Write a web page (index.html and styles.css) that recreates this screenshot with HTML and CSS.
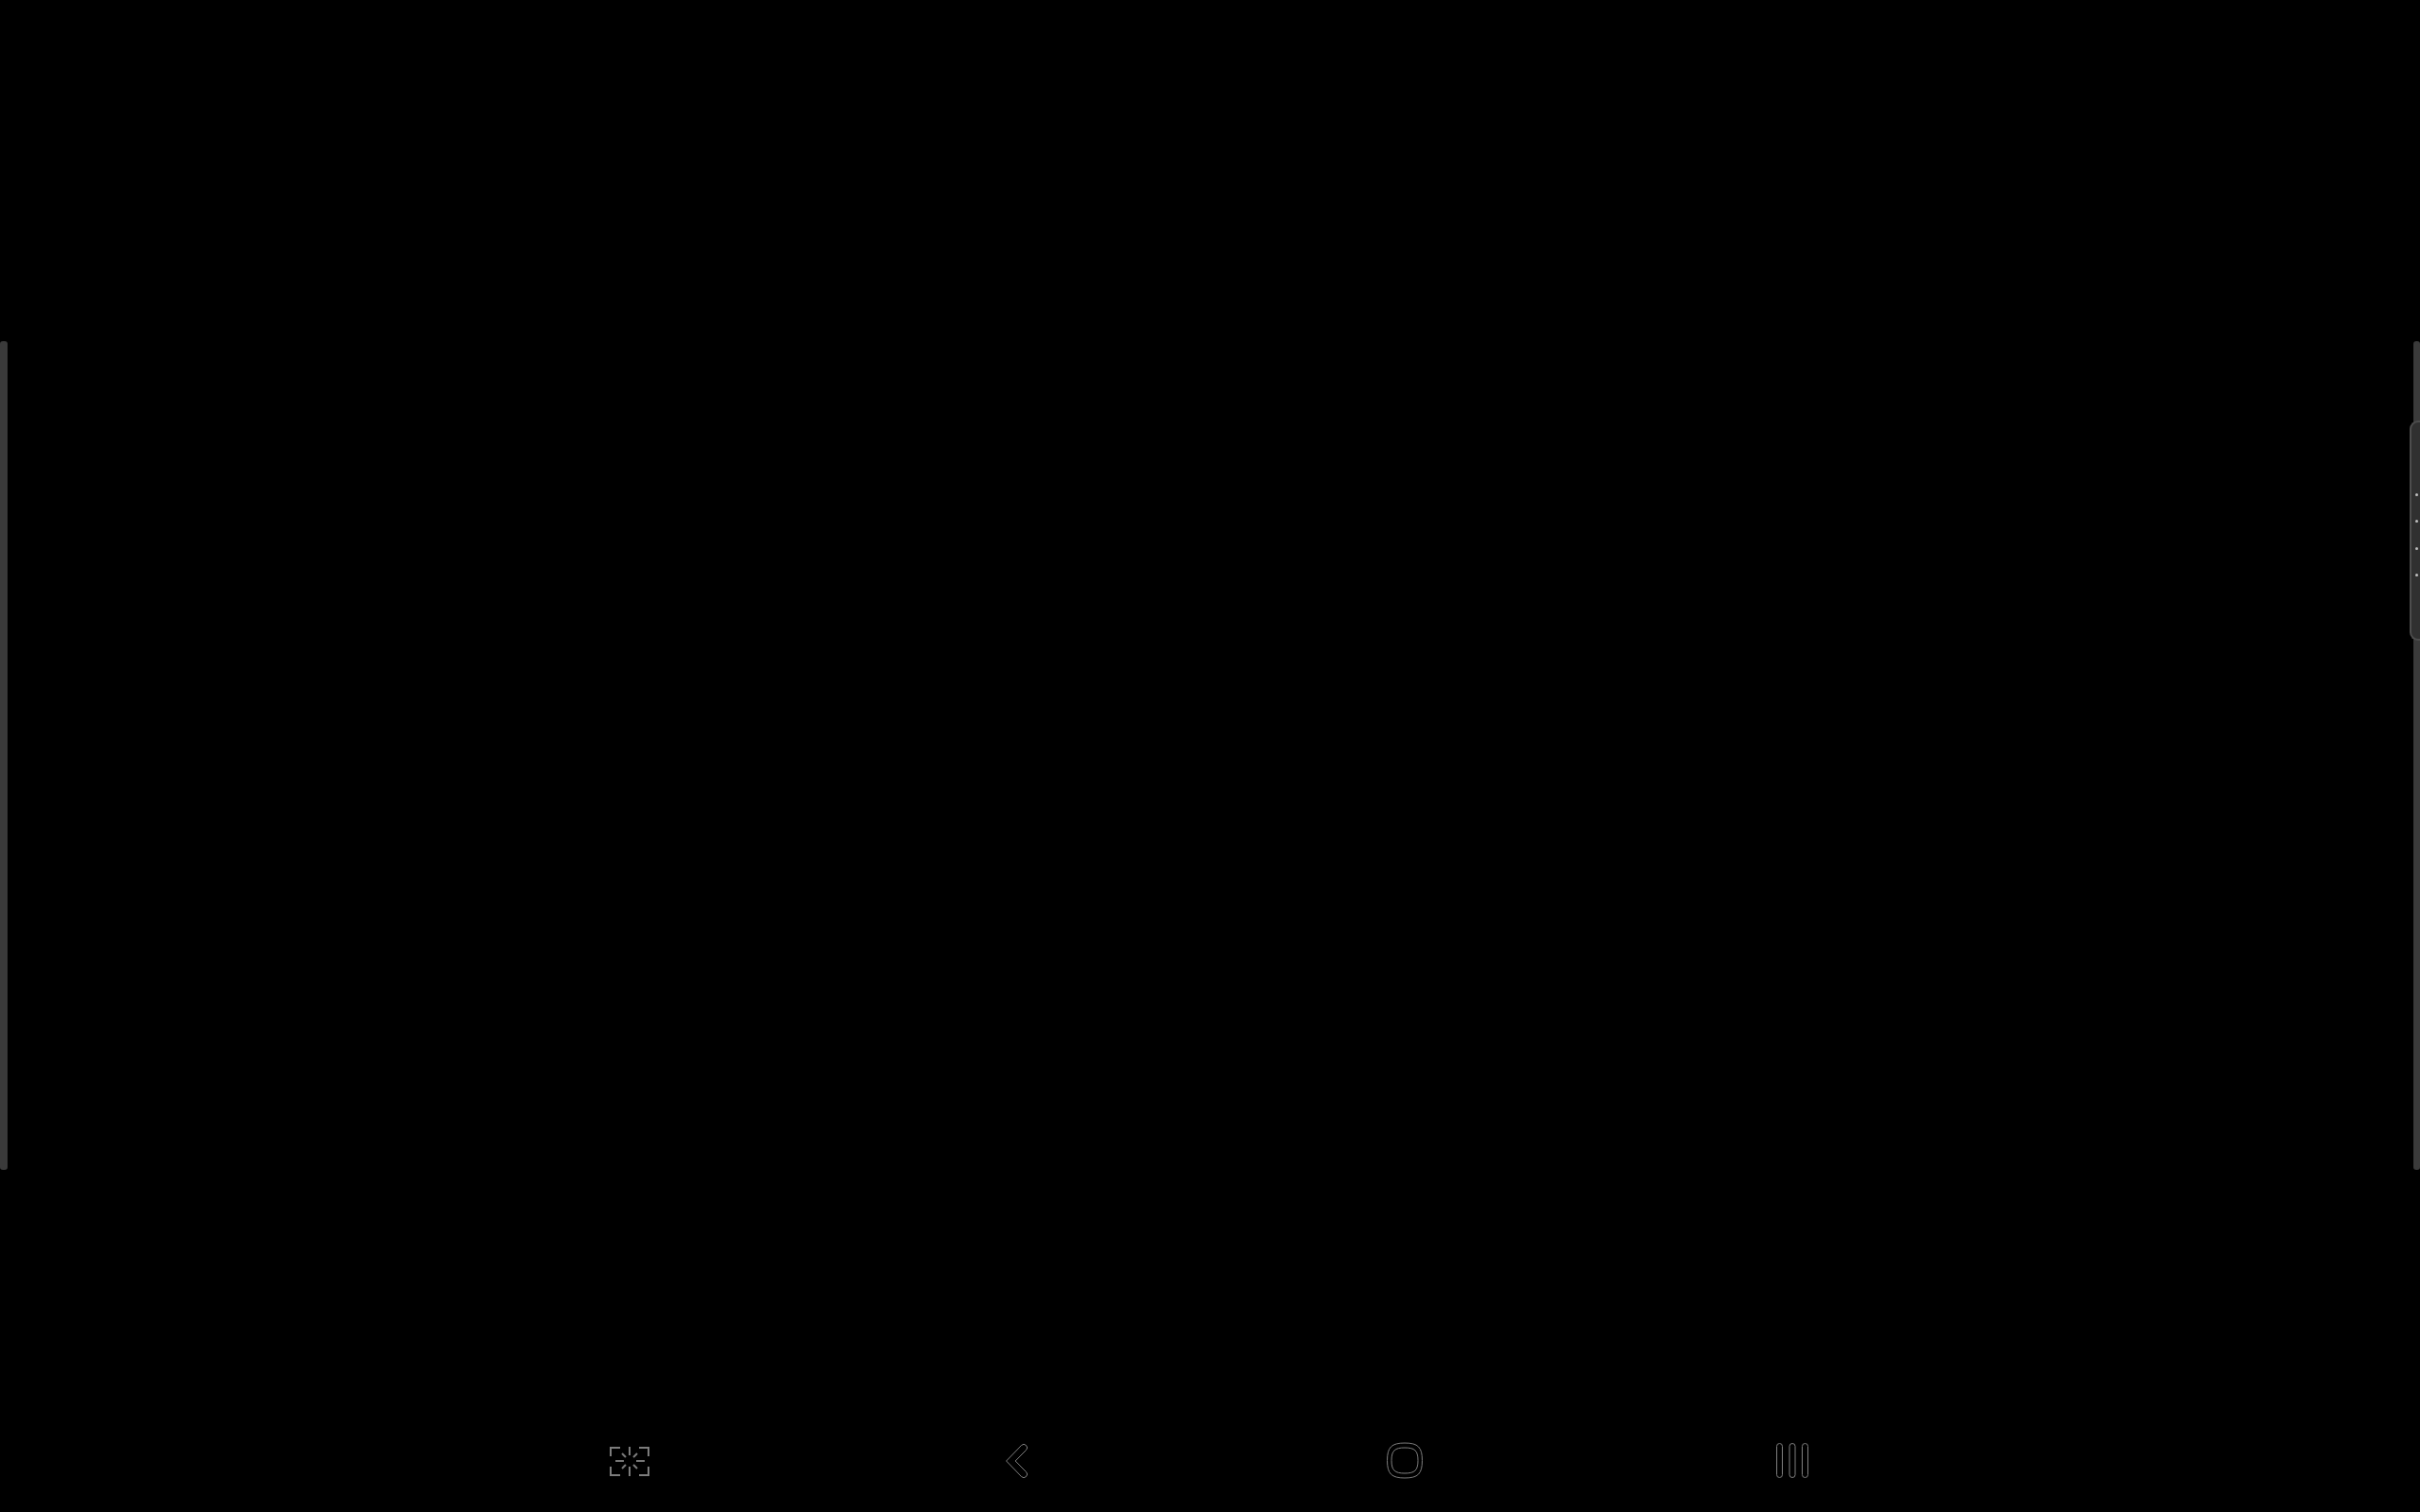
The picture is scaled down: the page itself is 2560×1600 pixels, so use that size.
FILE: index.html
```html
<!DOCTYPE html>
<html lang="en">
<head>
<meta charset="utf-8">
<title>Navigation bar</title>
<link rel="stylesheet" href="styles.css">
</head>
<body>
<main class="screen">
  <div class="edges">
    <div class="edge edge-left"></div>
    <div class="edge edge-right">
      <div class="handle">
        <span class="dot"></span>
        <span class="dot"></span>
        <span class="dot"></span>
        <span class="dot"></span>
      </div>
    </div>
  </div>
  <nav class="nav">
    <svg class="icon icon-capture" viewBox="636 1521 60 50" width="60" height="50" aria-label="Capture">
      <path d="M646 1541v-9h10M676 1532h10v9M686 1552v9h-10M656 1561h-10v-9"/>
      <path d="M666 1531v9M666 1552v10M651 1546h9M673 1546h9M658 1538l4 4M674 1538l-4 4M658 1554l4-4M674 1554l-4-4"/>
    </svg>
    <svg class="icon icon-line" viewBox="1046 1521 60 50" width="60" height="50" aria-label="Back">
      <path d="M1064.500 1546 1080.500 1529.500a3.400 3.400 0 0 1 5 5L1074 1546l11.500 11.500a3.400 3.400 0 0 1-5 5z"/>
    </svg>
    <svg class="icon icon-line" viewBox="1456 1521 60 50" width="60" height="50" aria-label="Home">
      <path d="M1486 1527C1500 1527 1504.500 1531.500 1504.500 1545.500C1504.500 1559.500 1500 1564 1486 1564C1472 1564 1467.500 1559.500 1467.500 1545.500C1467.500 1531.500 1472 1527 1486 1527Z"/>
      <path d="M1486 1532C1496.500 1532 1500 1535 1500 1545.500C1500 1556 1496.500 1559 1486 1559C1475.500 1559 1472 1556 1472 1545.500C1472 1535 1475.500 1532 1486 1532Z"/>
    </svg>
    <svg class="icon icon-line" viewBox="1866 1521 60 50" width="60" height="50" aria-label="Recents">
      <rect x="1879.500" y="1527.500" width="6" height="36" rx="3"/>
      <rect x="1893" y="1527.500" width="6" height="36" rx="3"/>
      <rect x="1906.500" y="1527.500" width="6" height="36" rx="3"/>
    </svg>
  </nav>
</main>
</body>
</html>
```

FILE: styles.css
```css
* {
  box-sizing: border-box;
}

html,
body {
  margin: 0;
  background: #000;
}

.screen {
  width: 2560px;
  height: 1600px;
  overflow: hidden;
  padding-top: 361px;
  background: #000;
}

.edges {
  display: flex;
  justify-content: space-between;
  height: 877px;
}

.edge {
  position: relative;
  background: #3a3a3a;
  border-radius: 3px;
}

.edge-left {
  width: 8px;
}

.edge-right {
  width: 7px;
}

.handle {
  position: absolute;
  top: 84px;
  right: 0;
  width: 11px;
  height: 233px;
  display: flex;
  flex-direction: column;
  align-items: center;
  gap: 25.500px;
  padding: 74.500px 0 0 1px;
  background: #303030;
  border: 2px solid #4d4d4d;
  border-right: 0;
  border-radius: 9px 0 0 9px;
}

.dot {
  width: 3px;
  height: 3px;
  border-radius: 50%;
  background: #c0c0c0;
}

.nav {
  display: flex;
  gap: 350px;
  margin-top: 283px;
  padding-left: 636px;
}

.icon {
  display: block;
  flex: none;
  fill: none;
}

.icon-capture path {
  stroke: #7c7c7c;
  stroke-width: 2;
}

.icon-line path,
.icon-line rect {
  stroke: #808080;
  stroke-width: 1;
}
```
